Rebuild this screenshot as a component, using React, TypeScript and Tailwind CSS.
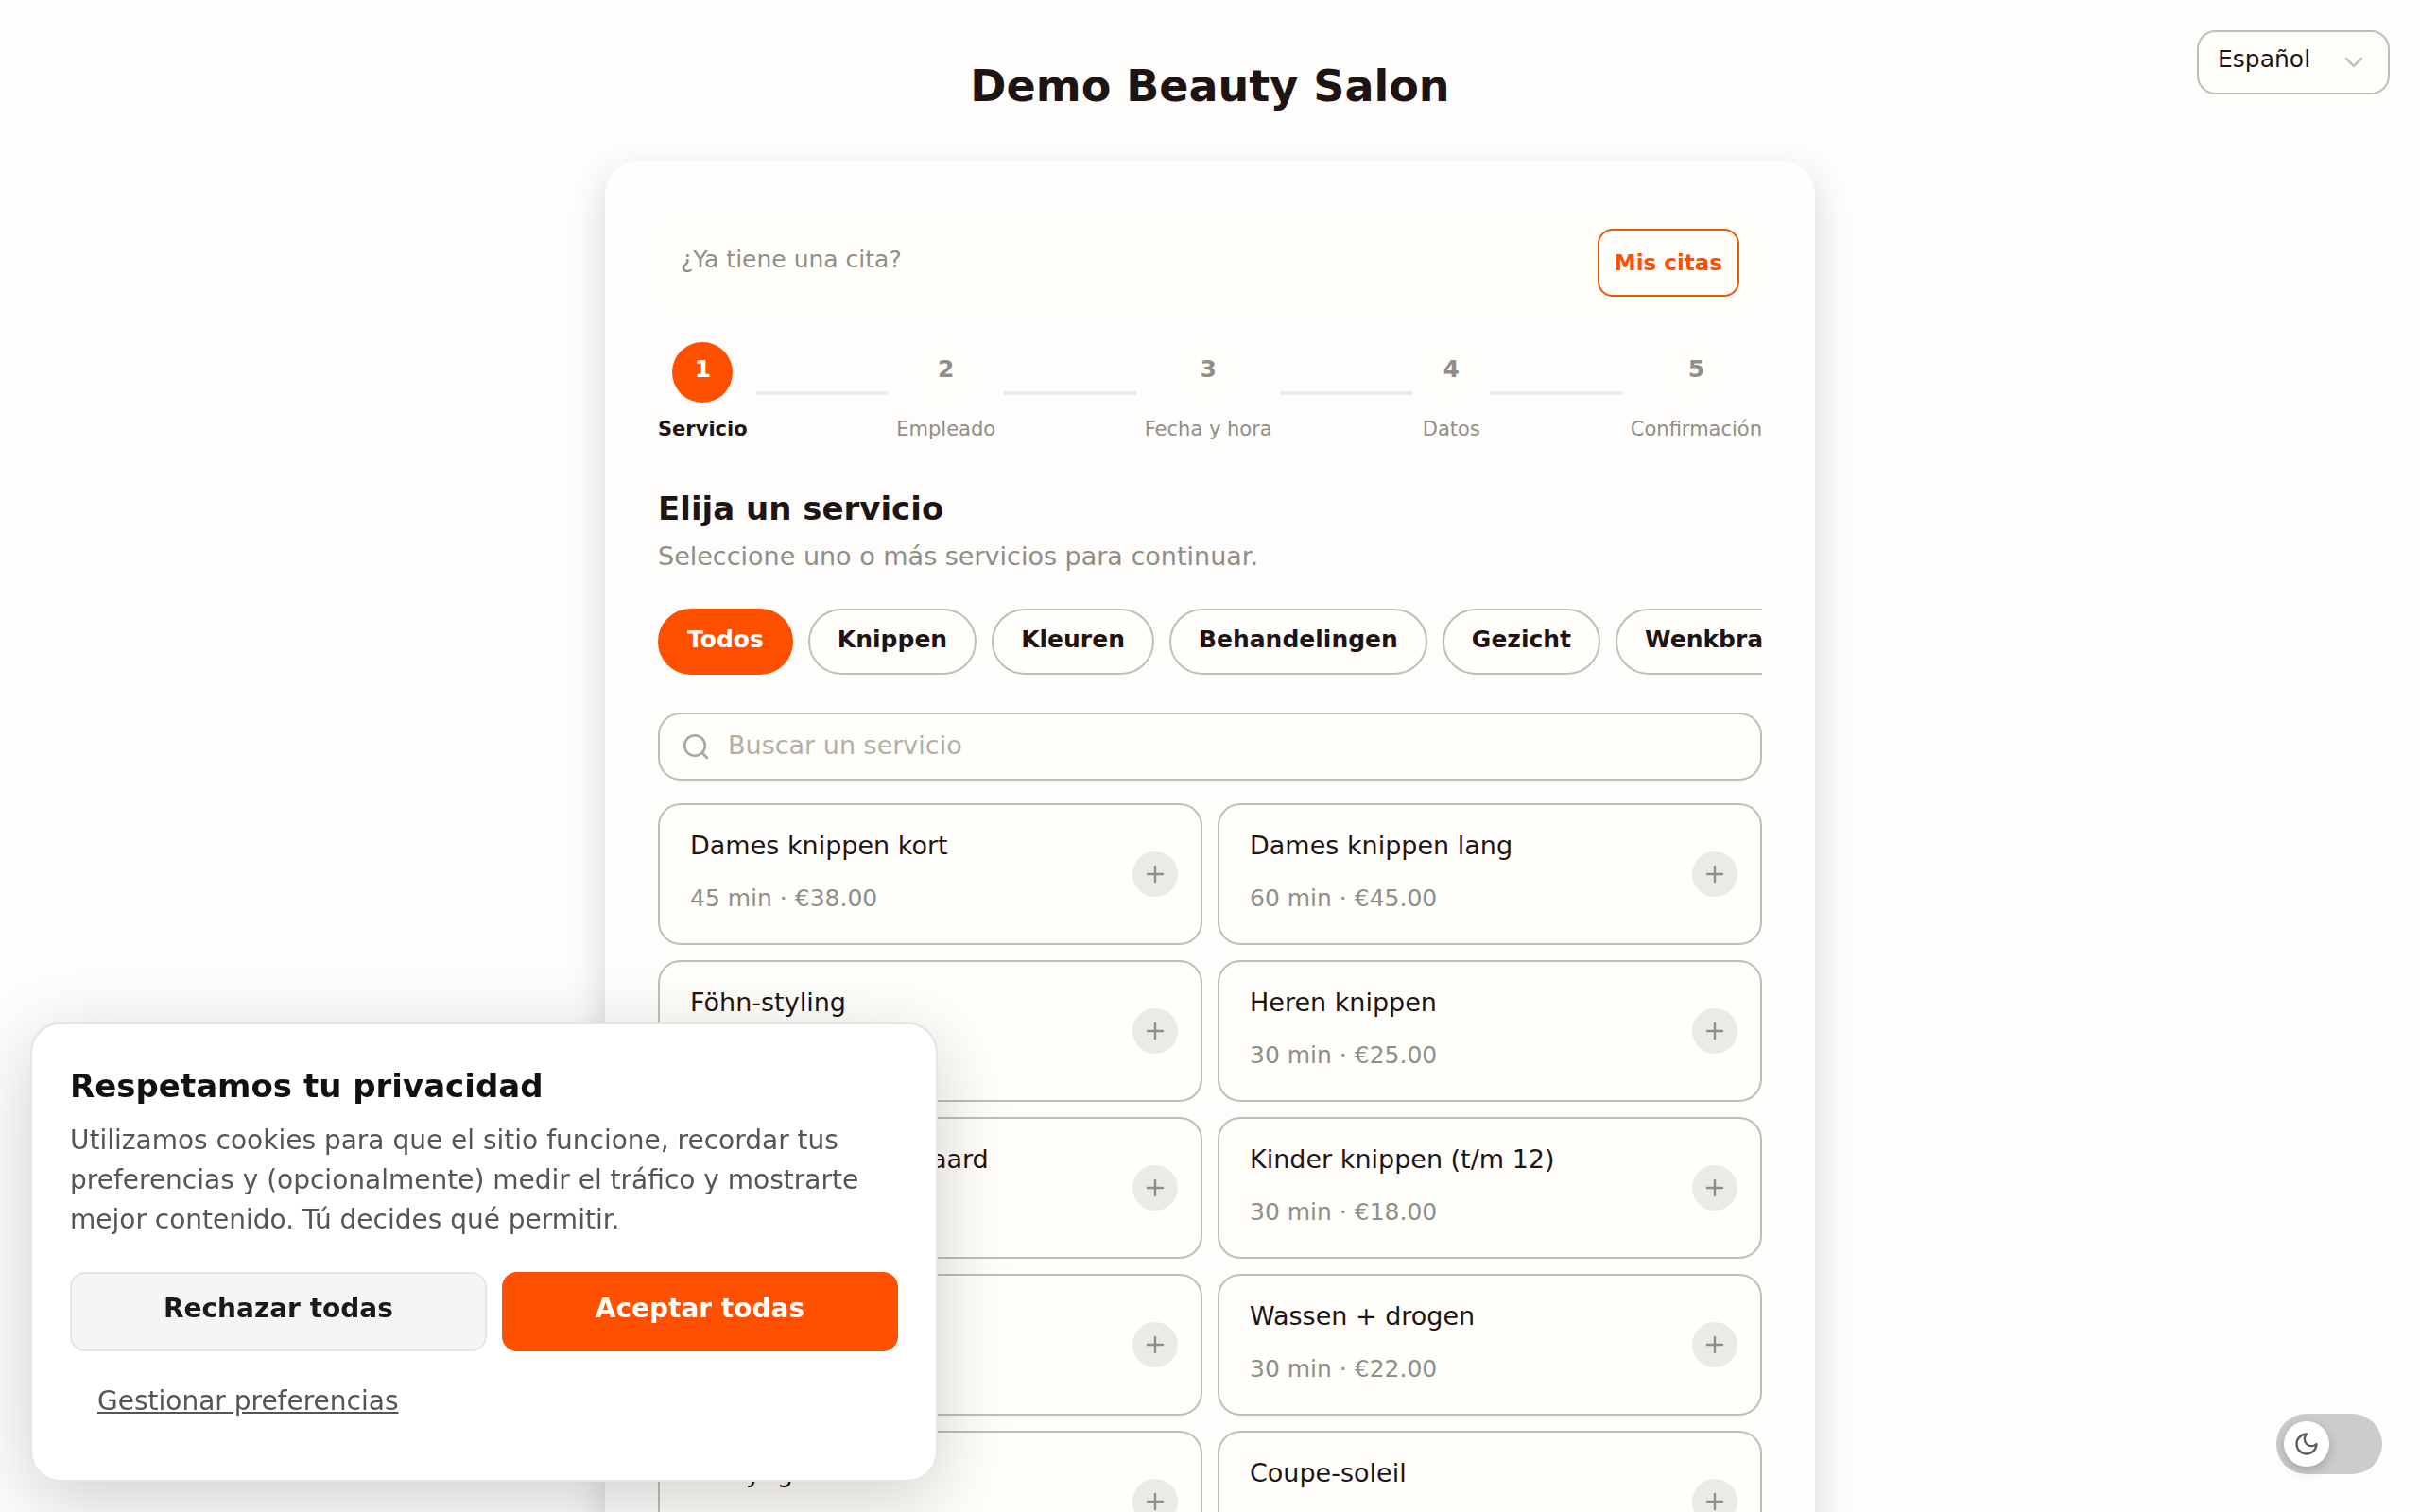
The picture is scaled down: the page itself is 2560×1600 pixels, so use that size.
import { Fragment, useState } from 'react'

interface Service {
  name: string
  minutes: number
  price: string
}

const STEPS = ['Servicio', 'Empleado', 'Fecha y hora', 'Datos', 'Confirmación']

const CATEGORIES = ['Todos', 'Knippen', 'Kleuren', 'Behandelingen', 'Gezicht', 'Wenkbrauwen']

const SERVICES: Service[] = [
  { name: 'Dames knippen kort', minutes: 45, price: '38.00' },
  { name: 'Dames knippen lang', minutes: 60, price: '45.00' },
  { name: 'Föhn-styling', minutes: 30, price: '28.00' },
  { name: 'Heren knippen', minutes: 30, price: '25.00' },
  { name: 'Heren knippen + baard', minutes: 45, price: '35.00' },
  { name: 'Kinder knippen (t/m 12)', minutes: 30, price: '18.00' },
  { name: 'Pony knippen', minutes: 15, price: '12.00' },
  { name: 'Wassen + drogen', minutes: 30, price: '22.00' },
  { name: 'Balayage', minutes: 150, price: '120.00' },
  { name: 'Coupe-soleil', minutes: 120, price: '95.00' },
]

function LanguageSelect() {
  return (
    <div className="absolute top-8 right-8">
      <select
        aria-label="Idioma"
        className="h-[68px] w-[204px] appearance-none rounded-[20px] border-2 border-[#c0c0b0] bg-[#fffefb] pb-1.5 pl-5 text-[25px] text-[#1f1414]"
      >
        <option>Español</option>
        <option>Nederlands</option>
        <option>English</option>
      </select>
      <svg className="pointer-events-none absolute top-[22px] right-[26px] size-6" viewBox="0 0 24 24" fill="none" stroke="#c4c4c4" strokeWidth={2.6} strokeLinecap="round" strokeLinejoin="round">
        <path d="M4 8l8 8 8-8" />
      </svg>
    </div>
  )
}

function Stepper() {
  return (
    <ol className="mt-8 flex items-center">
      {STEPS.map((step, i) => (
        <Fragment key={step}>
          {i > 0 && <li aria-hidden="true" className="mx-2 h-1 flex-1 rounded-full bg-[#ebebe8]" />}
          <li className="flex flex-col items-center gap-3">
            <span
              className={
                i === 0
                  ? 'flex size-16 items-center justify-center rounded-full bg-[#ff5000] pb-1.5 text-[25px] font-bold text-white'
                  : 'flex size-16 items-center justify-center rounded-full bg-[#fffefb] pb-1.5 text-[25px] font-bold text-[#8f8f85]'
              }
            >
              {i + 1}
            </span>
            <span className={i === 0 ? 'text-[21px] leading-8 font-bold text-[#1f1414]' : 'text-[21px] leading-8 text-[#8f8f85]'}>
              {step}
            </span>
          </li>
        </Fragment>
      ))}
    </ol>
  )
}

function ServiceCard({ service }: { service: Service }) {
  return (
    <button className="flex h-[150px] items-center justify-between rounded-3xl border-2 border-[#c0c0b0] bg-[#fffefb] pr-6 pl-8 text-left">
      <span className="flex flex-col gap-4 pb-1">
        <span className="text-[27px] leading-10 text-[#1f1414]">{service.name}</span>
        <span className="text-[25px] leading-10 text-[#8f8f85]">
          {service.minutes} min · €{service.price}
        </span>
      </span>
      <span className="flex size-12 items-center justify-center rounded-full bg-[#ebebe5]">
        <svg className="size-6" viewBox="0 0 24 24" stroke="#8f8f85" strokeWidth={2.4} strokeLinecap="round">
          <path d="M12 4v16M4 12h16" />
        </svg>
      </span>
    </button>
  )
}

function CookieBanner() {
  return (
    <section
      aria-label="Cookies"
      className="fixed bottom-8 left-8 w-[960px] rounded-[32px] border-2 border-[#e5e5e3] bg-white p-10 shadow-[0_20px_80px_rgba(0,0,0,0.18)]"
    >
      <h2 className="text-[34px] leading-[50px] font-bold text-[#111111]">Respetamos tu privacidad</h2>
      <p className="mt-3 text-[28px] leading-[42px] text-[#555555]">
        Utilizamos cookies para que el sitio funcione, recordar tus preferencias y (opcionalmente) medir el tráfico y
        mostrarte mejor contenido. Tú decides qué permitir.
      </p>
      <div className="mt-[34px] flex gap-4">
        <button className="h-[84px] flex-auto rounded-2xl border-2 border-[#e5e5e3] bg-[#f5f5f5] pb-1.5 text-[28px] font-bold text-[#1a1a1a]">
          Rechazar todas
        </button>
        <button className="h-[84px] flex-auto rounded-2xl border-2 border-[#ff5000] bg-[#ff5000] pb-1.5 text-[28px] font-bold text-white">
          Aceptar todas
        </button>
      </div>
      <button className="mt-4 h-20 px-[29px] pb-1.5 text-[28px] text-[#555555] underline">
        Gestionar preferencias
      </button>
    </section>
  )
}

function ThemeToggle() {
  const [dark, setDark] = useState(false)

  return (
    <button
      role="switch"
      aria-checked={dark}
      aria-label="Modo oscuro"
      onClick={() => setDark(!dark)}
      className="fixed right-10 bottom-10 flex h-16 w-28 items-center rounded-full bg-[#cccccc] px-2"
    >
      <span className="flex size-12 items-center justify-center rounded-full bg-white shadow-[0_4px_12px_rgba(0,0,0,0.2)]">
        <svg className="size-7" viewBox="0 0 24 24" fill="none" stroke="#5c5c5c" strokeWidth={2} strokeLinecap="round" strokeLinejoin="round">
          <path d="M12 3a6 6 0 0 0 9 9 9 9 0 1 1-9-9Z" />
        </svg>
      </span>
    </button>
  )
}

export default function App() {
  const [category, setCategory] = useState('Todos')
  const [query, setQuery] = useState('')

  return (
    <div className="relative h-screen overflow-hidden bg-[#fefdfb] font-['DejaVu_Sans',sans-serif]">
      <LanguageSelect />

      <h1 className="pt-14 text-center text-[46px] leading-[70px] font-bold text-[#1f1414]">Demo Beauty Salon</h1>

      <main className="mx-auto mt-11 w-1/2 rounded-[36px] bg-[#fefdfc] p-14 shadow-[0_16px_40px_rgba(0,0,0,0.16)]">
        <div className="flex items-center justify-between rounded-3xl bg-[#fffefb] px-6 py-4">
          <p className="pb-1.5 text-[25px] text-[#8f8f85]">¿Ya tiene una cita?</p>
          <button className="h-[72px] rounded-2xl border-2 border-[#e8590c] px-4 text-[23px] font-bold text-[#ff5000]">
            Mis citas
          </button>
        </div>

        <Stepper />

        <h2 className="mt-11 text-[34px] leading-[48px] font-bold text-[#1f1414]">Elija un servicio</h2>
        <p className="mt-1.5 text-[27px] leading-[42px] text-[#8f8f85]">Seleccione uno o más servicios para continuar.</p>

        <div className="mt-[34px] flex gap-4 overflow-hidden">
          {CATEGORIES.map((name) => (
            <button
              key={name}
              onClick={() => setCategory(name)}
              className={
                name === category
                  ? 'h-[70px] shrink-0 rounded-full border-2 border-[#ff5000] bg-[#ff5000] px-[29px] pb-1 text-[25px] font-bold text-white'
                  : 'h-[70px] shrink-0 rounded-full border-2 border-[#c0c0b0] bg-[#fffefb] px-[29px] pb-1 text-[25px] font-bold text-[#1f1414]'
              }
            >
              {name}
            </button>
          ))}
        </div>

        <div className="relative mt-10">
          <svg className="absolute top-[22px] left-6 size-8" viewBox="0 0 32 32" fill="none" stroke="#a8a8a0" strokeWidth={2.6} strokeLinecap="round">
            <circle cx="15" cy="13" r="10.8" />
            <path d="M23 21l5 5" />
          </svg>
          <input
            type="search"
            aria-label="Buscar un servicio"
            placeholder="Buscar un servicio"
            value={query}
            onChange={(e) => setQuery(e.target.value)}
            className="block h-[72px] w-full rounded-3xl border-2 border-[#c0c0b0] bg-[#fffefb] pr-6 pb-1 pl-[72px] text-[27px] text-[#1f1414] placeholder:text-[#b0b0a8]"
          />
        </div>

        <div className="mt-6 grid grid-cols-2 gap-4">
          {SERVICES.map((service) => (
            <ServiceCard key={service.name} service={service} />
          ))}
        </div>
      </main>

      <CookieBanner />
      <ThemeToggle />
    </div>
  )
}
